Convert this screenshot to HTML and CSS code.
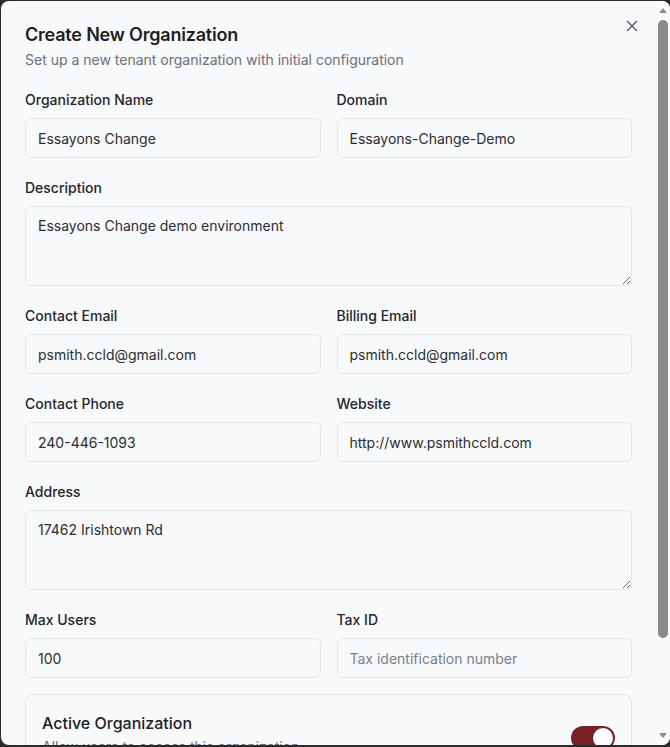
FILE: index.html
```html
<!DOCTYPE html>
<html lang="en">
<head>
<meta charset="utf-8">
<title>Create New Organization</title>
<link rel="stylesheet" href="styles.css">
</head>
<body>
<div class="modal">
  <div class="modal-body">
    <button class="close" aria-label="Close">
      <svg width="16" height="16" viewBox="0 0 16 16" fill="none" stroke="currentColor" stroke-width="1.4" stroke-linecap="round"><path d="M3.5 3.5l9 9M12.5 3.5l-9 9"/></svg>
    </button>
    <header class="head">
      <h2 class="title">Create New Organization</h2>
      <p class="subtitle">Set up a new tenant organization with initial configuration</p>
    </header>
    <form class="form">
      <div class="row two">
        <div class="field"><label>Organization Name</label><input class="input" value="Essayons Change"></div>
        <div class="field"><label>Domain</label><input class="input" value="Essayons-Change-Demo"></div>
      </div>
      <div class="field"><label>Description</label><textarea class="input area">Essayons Change demo environment</textarea></div>
      <div class="row two">
        <div class="field"><label>Contact Email</label><input class="input" value="psmith.ccld@gmail.com"></div>
        <div class="field"><label>Billing Email</label><input class="input" value="psmith.ccld@gmail.com"></div>
      </div>
      <div class="row two">
        <div class="field"><label>Contact Phone</label><input class="input" value="240-446-1093"></div>
        <div class="field"><label>Website</label><input class="input" value="http://www.psmithccld.com"></div>
      </div>
      <div class="field"><label>Address</label><textarea class="input area">17462 Irishtown Rd</textarea></div>
      <div class="row two">
        <div class="field"><label>Max Users</label><input class="input" value="100"></div>
        <div class="field"><label>Tax ID</label><input class="input" placeholder="Tax identification number"></div>
      </div>
      <div class="card">
        <div class="card-text">
          <div class="card-title">Active Organization</div>
          <div class="card-sub">Allow users to access this organization</div>
        </div>
        <span class="toggle"><span class="knob"></span></span>
      </div>
      <div class="footer">
        <button type="button" class="btn ghost">Cancel</button>
        <button type="button" class="btn primary">Create Organization</button>
      </div>
    </form>
  </div>
  <div class="scrollbar" aria-hidden="true">
    <svg class="arrow" width="14" height="16" viewBox="0 0 14 16"><path d="M3 12h8L7 7z" fill="#8c8c8c"/></svg>
    <div class="thumb"></div>
    <div class="track-rest"></div>
    <svg class="arrow" width="14" height="16" viewBox="0 0 14 16"><path d="M3 4h8L7 9z" fill="#8c8c8c"/></svg>
  </div>
</div>
</body>
</html>
```
FILE: styles.css
```css
* { box-sizing: border-box; }
html, body { margin: 0; height: 100%; overflow: hidden; }
body {
  background: #2b2b2b;
  font-family: Inter, "Noto Sans", sans-serif;
  color: #1f2228;
  padding: 1px 0 0 1px;
}
.modal {
  width: 669px;
  height: 744px;
  background: #f8f9fb;
  border-radius: 8px;
  overflow: hidden;
  display: flex;
}
.modal-body {
  position: relative;
  flex: 1;
  min-width: 0;
  overflow: hidden;
  padding: 0 24px 24px 24px;
}
.scrollbar {
  width: 14px;
  flex: none;
  background: #fafafa;
  display: flex;
  flex-direction: column;
  align-items: center;
}
.arrow { display: block; flex: none; }
.thumb {
  margin-top: 3px;
  width: 10px;
  height: 618px;
  border-radius: 5px;
  background: #8a8a8a;
  flex: none;
}
.track-rest { flex: 1; }
.close {
  position: absolute;
  top: 17px;
  right: 16px;
  width: 16px;
  height: 16px;
  padding: 0;
  border: 0;
  background: none;
  color: #555a62;
  display: flex;
}
.head { padding-top: 21px; margin-bottom: 20px; }
.title {
  margin: 0;
  font-size: 18px;
  line-height: 26px;
  font-weight: 600;
  color: #1c1f25;
  letter-spacing: -0.2px;
}
.subtitle {
  margin: 2px 0 0;
  font-size: 14px;
  line-height: 20px;
  color: #6b7079;
}
.form { display: flex; flex-direction: column; gap: 20px; }
.row.two { display: grid; grid-template-columns: 1fr 1fr; gap: 16px; }
.field { display: flex; flex-direction: column; }
.field label {
  font-size: 14px;
  line-height: 20px;
  font-weight: 500;
  color: #23262c;
  margin-bottom: 8px;
}
.input {
  height: 40px;
  border: 1px solid #e3e5e9;
  border-radius: 6px;
  background: #f8f9fb;
  padding: 0 12px;
  font-family: inherit;
  font-size: 14px;
  color: #2a2d33;
  outline: none;
}
.input::placeholder { color: #7b8089; }
.area {
  height: 80px;
  padding: 9px 12px;
  line-height: 20px;
  resize: vertical;
}
.card {
  margin-top: -4px;
  border: 1px solid #e3e5e9;
  border-radius: 8px;
  padding: 16px;
  display: flex;
  align-items: flex-start;
  justify-content: space-between;
}
.card-title { font-size: 16px; line-height: 24px; font-weight: 500; color: #1f2228; }
.card-sub { font-size: 14px; line-height: 20px; color: #6b7079; margin-top: 2px; }
.toggle {
  margin-top: 15px;
  width: 44px;
  height: 24px;
  border-radius: 12px;
  background: #7a2128;
  display: flex;
  align-items: center;
  justify-content: flex-end;
  padding: 2px;
}
.knob { width: 20px; height: 20px; border-radius: 50%; background: #fff; }
.footer { display: flex; justify-content: flex-end; gap: 8px; }
.btn {
  height: 40px;
  padding: 0 16px;
  border-radius: 6px;
  font-family: inherit;
  font-size: 14px;
  font-weight: 500;
}
.btn.ghost { border: 1px solid #e3e5e9; background: #fff; color: #1f2228; }
.btn.primary { border: 0; background: #7a2128; color: #fff; }
```
